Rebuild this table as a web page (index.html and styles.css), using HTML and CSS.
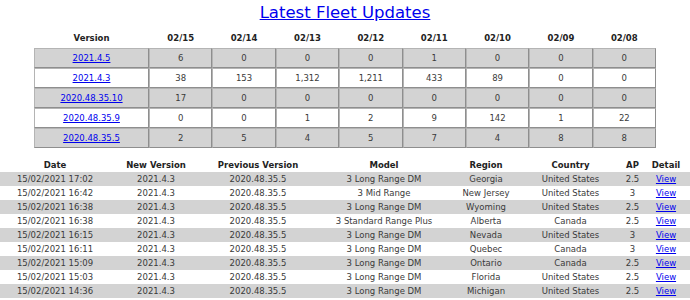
FILE: index.html
```html
<!DOCTYPE html>
<html>
<head>
<meta charset="utf-8">
<title>Latest Fleet Updates</title>
<link rel="stylesheet" href="styles.css">
</head>
<body>
<div class="title"><a href="#">Latest Fleet Updates</a></div>

<table class="fleet">
  <colgroup>
    <col class="c-ver"><col><col><col><col><col><col><col><col>
  </colgroup>
  <thead>
    <tr><th>Version</th><th>02/15</th><th>02/14</th><th>02/13</th><th>02/12</th><th>02/11</th><th>02/10</th><th>02/09</th><th>02/08</th></tr>
  </thead>
  <tbody>
    <tr class="alt"><td><a href="#">2021.4.5</a></td><td>6</td><td>0</td><td>0</td><td>0</td><td>1</td><td>0</td><td>0</td><td>0</td></tr>
    <tr><td><a href="#">2021.4.3</a></td><td>38</td><td>153</td><td>1,312</td><td>1,211</td><td>433</td><td>89</td><td>0</td><td>0</td></tr>
    <tr class="alt"><td><a href="#">2020.48.35.10</a></td><td>17</td><td>0</td><td>0</td><td>0</td><td>0</td><td>0</td><td>0</td><td>0</td></tr>
    <tr><td><a href="#">2020.48.35.9</a></td><td>0</td><td>0</td><td>1</td><td>2</td><td>9</td><td>142</td><td>1</td><td>22</td></tr>
    <tr class="alt"><td><a href="#">2020.48.35.5</a></td><td>2</td><td>5</td><td>4</td><td>5</td><td>7</td><td>4</td><td>8</td><td>8</td></tr>
  </tbody>
</table>

<table class="updates">
  <colgroup>
    <col class="w-date"><col class="w-new"><col class="w-prev"><col class="w-model"><col class="w-region"><col class="w-country"><col class="w-ap"><col class="w-detail">
  </colgroup>
  <thead>
    <tr><th>Date</th><th>New Version</th><th>Previous Version</th><th>Model</th><th>Region</th><th>Country</th><th>AP</th><th>Detail</th></tr>
  </thead>
  <tbody>
    <tr class="alt"><td>15/02/2021 17:02</td><td>2021.4.3</td><td>2020.48.35.5</td><td>3 Long Range DM</td><td>Georgia</td><td>United States</td><td>2.5</td><td><a href="#">View</a></td></tr>
    <tr><td>15/02/2021 16:42</td><td>2021.4.3</td><td>2020.48.35.5</td><td>3 Mid Range</td><td>New Jersey</td><td>United States</td><td>3</td><td><a href="#">View</a></td></tr>
    <tr class="alt"><td>15/02/2021 16:38</td><td>2021.4.3</td><td>2020.48.35.5</td><td>3 Long Range DM</td><td>Wyoming</td><td>United States</td><td>2.5</td><td><a href="#">View</a></td></tr>
    <tr><td>15/02/2021 16:38</td><td>2021.4.3</td><td>2020.48.35.5</td><td>3 Standard Range Plus</td><td>Alberta</td><td>Canada</td><td>2.5</td><td><a href="#">View</a></td></tr>
    <tr class="alt"><td>15/02/2021 16:15</td><td>2021.4.3</td><td>2020.48.35.5</td><td>3 Long Range DM</td><td>Nevada</td><td>United States</td><td>3</td><td><a href="#">View</a></td></tr>
    <tr><td>15/02/2021 16:11</td><td>2021.4.3</td><td>2020.48.35.5</td><td>3 Long Range DM</td><td>Quebec</td><td>Canada</td><td>3</td><td><a href="#">View</a></td></tr>
    <tr class="alt"><td>15/02/2021 15:09</td><td>2021.4.3</td><td>2020.48.35.5</td><td>3 Long Range DM</td><td>Ontario</td><td>Canada</td><td>2.5</td><td><a href="#">View</a></td></tr>
    <tr><td>15/02/2021 15:03</td><td>2021.4.3</td><td>2020.48.35.5</td><td>3 Long Range DM</td><td>Florida</td><td>United States</td><td>2.5</td><td><a href="#">View</a></td></tr>
    <tr class="alt"><td>15/02/2021 14:36</td><td>2021.4.3</td><td>2020.48.35.5</td><td>3 Long Range DM</td><td>Michigan</td><td>United States</td><td>2.5</td><td><a href="#">View</a></td></tr>
  </tbody>
</table>
</body>
</html>
```

FILE: styles.css
```css
html, body {
  margin: 0;
  padding: 0;
  background: #ffffff;
}

body {
  font-family: "DejaVu Sans", Verdana, sans-serif;
  font-size: 8.5px;
  color: #3a3a3a;
}

a {
  color: #0000ee;
  text-decoration: underline;
}

.title {
  text-align: center;
  font-size: 16.5px;
  line-height: 20px;
  padding-top: 3px;
}

.fleet {
  width: 622px;
  margin: 5px auto 0;
  table-layout: fixed;
  border-collapse: separate;
  border-spacing: 0;
}

.fleet .c-ver {
  width: 115px;
}

.fleet th {
  height: 20px;
  padding: 0;
  font-weight: bold;
  color: #222222;
  text-align: center;
  vertical-align: middle;
}

.fleet td {
  height: 18px;
  padding: 0;
  text-align: center;
  vertical-align: middle;
  border: 1px solid;
  border-color: #b4b4b4 #8e8e8e #8e8e8e #b4b4b4;
}

.fleet tr.alt td {
  background: #d3d3d3;
}

.updates {
  width: 690px;
  margin-top: 10px;
  table-layout: fixed;
  border-collapse: collapse;
  border-spacing: 0;
}

.updates .w-date { width: 110px; }
.updates .w-new { width: 92px; }
.updates .w-prev { width: 112px; }
.updates .w-model { width: 140px; }
.updates .w-region { width: 64px; }
.updates .w-country { width: 105px; }
.updates .w-ap { width: 19px; }
.updates .w-detail { width: 48px; }

.updates th {
  height: 14px;
  padding: 0;
  font-weight: bold;
  color: #222222;
  text-align: center;
  vertical-align: middle;
}

.updates td {
  height: 14px;
  padding: 0;
  text-align: center;
  vertical-align: middle;
  white-space: nowrap;
}

.updates tr.alt td {
  background: #d3d3d3;
}
```
